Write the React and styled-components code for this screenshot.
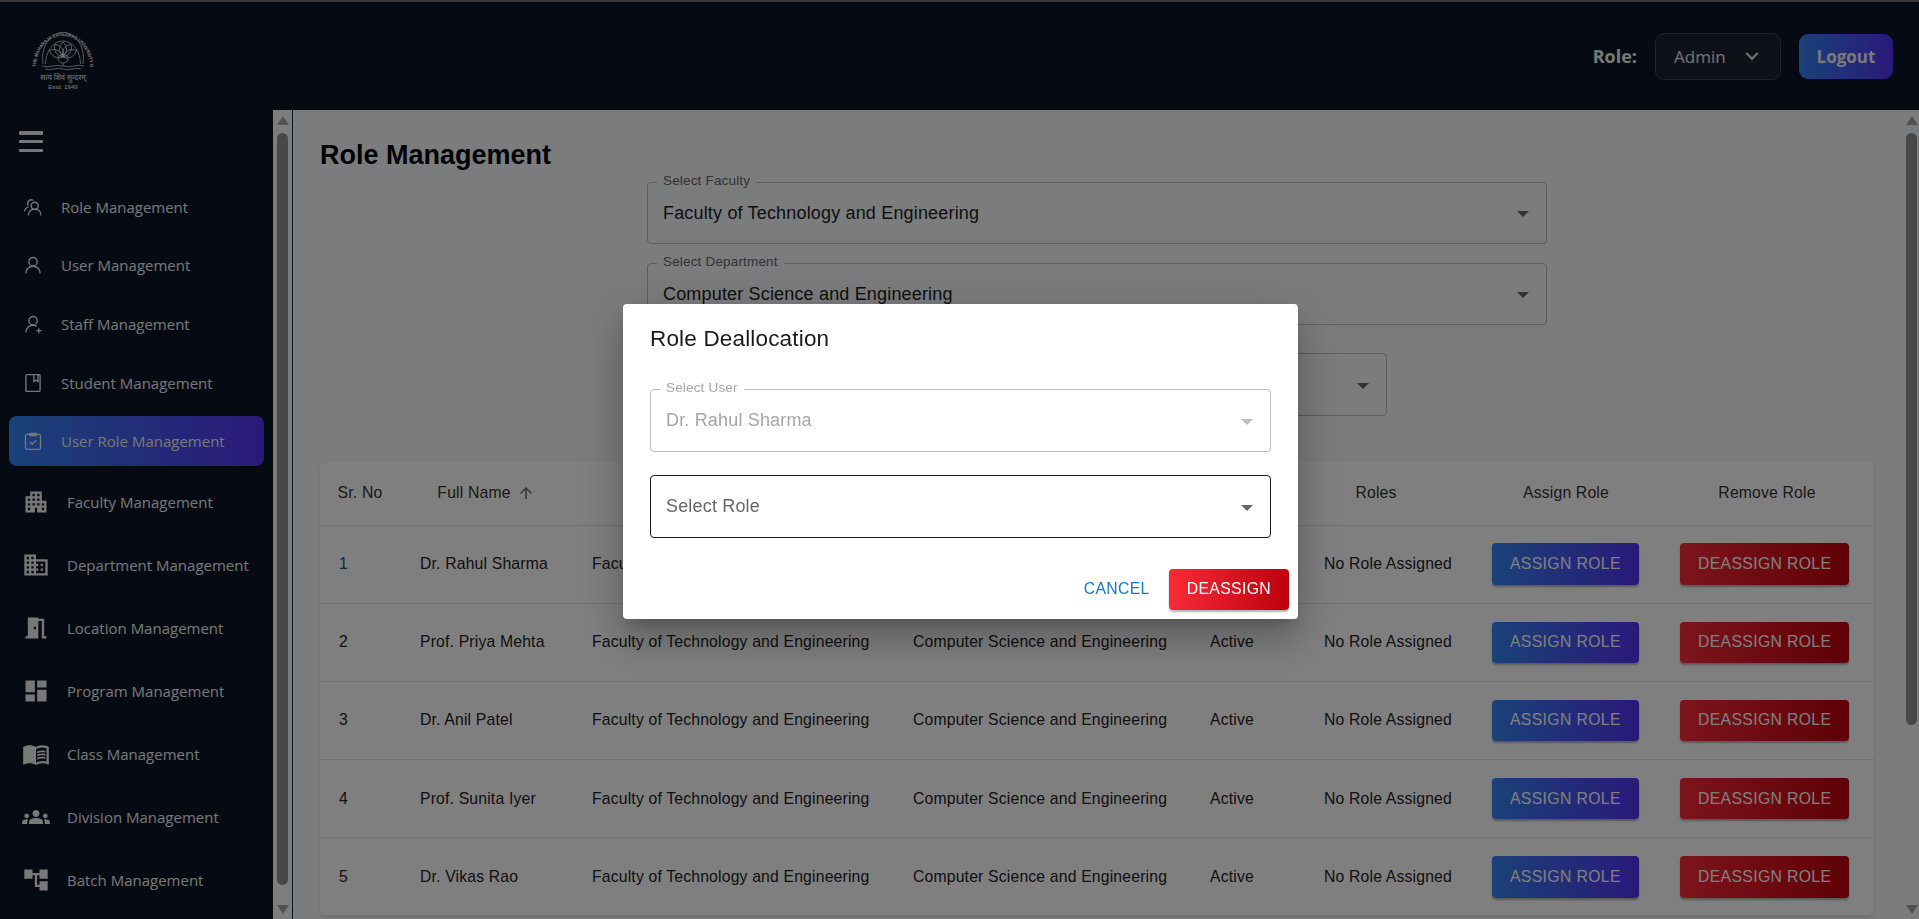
import styled, { createGlobalStyle } from 'styled-components';
import { MdApartment, MdDomain, MdMeetingRoom, MdDashboard, MdMenuBook, MdGroups, MdAccountTree, MdKeyboardArrowDown } from 'react-icons/md';

const GlobalStyle = createGlobalStyle`
  html, body {
    margin: 0;
    height: 100%;
    overflow: hidden;
    background: #f6f8fc;
    font-family: "Liberation Sans", Arial, sans-serif;
  }
  * { box-sizing: border-box; }
`;

const Page = styled.div`
  height: 100vh;
  display: flex;
  flex-direction: column;
  overflow: hidden;
`;

const TopBar = styled.header`
  height: 110px;
  flex: none;
  display: flex;
  align-items: center;
  justify-content: space-between;
  padding: 0 26px 0 29px;
  background: #0c1626;
  border-top: 2px solid #6e7278;
`;

const LogoWrap = styled.div`
  width: 68px;
  height: 74px;
  margin-top: -4px;
  color: #f4f4f4;
`;

const HeaderRight = styled.div`
  display: flex;
  align-items: center;
  font-family: "Open Sans", sans-serif;
`;

const RoleLabel = styled.span`
  font-size: 18px;
  font-weight: 700;
  color: #f0f0f0;
  margin-right: 18px;
`;

const RoleSelect = styled.div`
  width: 126px;
  height: 47px;
  display: flex;
  align-items: center;
  justify-content: space-between;
  padding: 0 15px 0 18px;
  margin-right: 18px;
  border: 1px solid #3f444c;
  border-radius: 9px;
  background: #1d2430;
  color: #e6e6e6;
  font-size: 17px;
`;

const LogoutButton = styled.button`
  width: 94px;
  height: 45px;
  border: 0;
  border-radius: 9px;
  background: linear-gradient(90deg, #3484f0, #5632f4);
  color: #f4f4f4;
  font: 700 17px "Open Sans", sans-serif;
`;

const Body = styled.div`
  flex: 1;
  min-height: 0;
  display: flex;
`;

const Sidebar = styled.nav`
  width: 273px;
  flex: none;
  background: #0c1626;
  padding: 21px 9px 0;
  overflow: hidden;
  font-family: "Open Sans", sans-serif;
`;

const MenuToggle = styled.div`
  width: 24px;
  height: 21px;
  margin: 0 0 29.500px 10px;
  display: flex;
  flex-direction: column;
  justify-content: space-between;

  span {
    height: 3.500px;
    background: #f0f0f0;
    border-radius: 1px;
  }
`;

const NavGroup = styled.div`
  display: flex;
  flex-direction: column;
  gap: ${props => (props.$wide ? '0' : '8.700px')};
  margin-top: ${props => (props.$wide ? '3.800px' : '0')};
`;

const NavItem = styled.div`
  height: ${props => (props.$wide ? '63px' : '50px')};
  display: flex;
  align-items: center;
  gap: ${props => (props.$wide ? '17px' : '18px')};
  padding-left: ${props => (props.$wide ? '13px' : '14px')};
  border-radius: 8px;
  color: #eceef0;
  font-size: 15px;
  background: ${props => (props.$active ? 'linear-gradient(90deg, #3484f0, #5632f4)' : 'transparent')};

  svg {
    flex: none;
    color: #f0f0f0;
  }
`;

const ScrollTrack = styled.div`
  width: ${props => props.$width}px;
  flex: none;
  display: flex;
  flex-direction: column;
  align-items: center;
  padding-top: 6px;
  background: ${props => props.$bg};
  border-right: ${props => (props.$divider ? '1px solid #1b2a3c' : '0')};
`;

const ScrollArrow = styled.div`
  width: 0;
  height: 0;
  border-left: 6px solid transparent;
  border-right: 6px solid transparent;
  border-bottom: ${props => (props.$down ? '0' : '9px solid #a4a4a4')};
  border-top: ${props => (props.$down ? '9px solid #a4a4a4' : '0')};
  margin-top: ${props => (props.$down ? 'auto' : '0')};
  margin-bottom: ${props => (props.$down ? '5px' : '8px')};
`;

const ScrollThumb = styled.div`
  width: 11px;
  height: ${props => props.$height}px;
  border-radius: 6px;
  background: #909090;
`;

const Main = styled.main`
  flex: 1;
  min-width: 0;
  padding: 29px 30px 0 27px;
  overflow: hidden;
  background: #f6f8fc;
`;

const Title = styled.h1`
  margin: 0 0 11px;
  font-size: 27px;
  line-height: 32px;
  font-weight: 700;
  color: #000;
`;

const Filters = styled.div`
  display: flex;
  flex-direction: column;
  align-items: center;
  margin-bottom: 45px;
`;

const SelectBox = styled.div`
  position: relative;
  width: ${props => props.$width || '100%'};
  height: ${props => props.$height || 62}px;
  margin-bottom: ${props => props.$gap || 0}px;
  display: flex;
  align-items: center;
  justify-content: space-between;
  padding: 0 17px 0 15px;
  border: 1px solid ${props => props.$border || '#b9babc'};
  border-radius: 4px;
  font-size: 18px;
  letter-spacing: 0.170px;
  color: ${props => props.$color || '#1d1d1d'};
`;

const SelectLabel = styled.label`
  position: absolute;
  top: -9px;
  left: 9px;
  padding: 0 6px;
  font-size: 13.500px;
  line-height: 14px;
  letter-spacing: 0.170px;
  color: ${props => props.$color || '#666'};
  background: ${props => props.$bg};
`;

const Caret = styled.span`
  width: 0;
  height: 0;
  margin-top: 2px;
  border-left: 6px solid transparent;
  border-right: 6px solid transparent;
  border-top: 6px solid ${props => props.$color || '#666'};
`;

const TableCard = styled.div`
  background: #fff;
  border-radius: 6px;
  box-shadow: 0 1px 3px rgba(0, 0, 0, 0.12);
  font-size: 15.750px;
  letter-spacing: 0.170px;
  color: #222;
`;

const TableRow = styled.div`
  display: grid;
  grid-template-columns: 80px 172px 321px 297px 114px 168px 188px 214px;
  align-items: center;
  height: ${props => (props.$head ? '64.500px' : '78.200px')};
  border-bottom: 1px solid #e2e3e5;
`;

const HeadCell = styled.div`
  display: flex;
  align-items: center;
  justify-content: center;
  gap: 6px;
  padding-right: ${props => (props.$hiddenSort ? '24px' : '0')};
  color: #333;
`;

const Cell = styled.div`
  padding-left: ${props => (props.$first ? '19px' : '20px')};
  white-space: nowrap;
  color: ${props => props.$color || '#222'};
`;

const ActionButton = styled.button`
  height: 41.500px;
  padding: 0 18px;
  border: 0;
  border-radius: 4px;
  font: 15.750px "Liberation Sans", Arial, sans-serif;
  letter-spacing: 0.360px;
  color: #fff;
  background: ${props => (props.$danger
    ? 'linear-gradient(90deg, #f92a38, #bd000d)'
    : 'linear-gradient(90deg, #3484f0, #5632f4)')};
  box-shadow: 0 2px 2px rgba(0, 0, 0, 0.3);
`;

const Overlay = styled.div`
  position: fixed;
  inset: 0;
  padding: 4px 0 0 2px;
  display: flex;
  align-items: center;
  justify-content: center;
  background: rgba(0, 0, 0, 0.5);
`;

const Dialog = styled.div`
  width: 675px;
  height: 315px;
  padding: 20px 9px 9px 27px;
  display: flex;
  flex-direction: column;
  background: #fff;
  border-radius: 4px;
  box-shadow: 0 11px 15px -7px rgba(0, 0, 0, 0.2), 0 24px 38px 3px rgba(0, 0, 0, 0.14), 0 9px 46px 8px rgba(0, 0, 0, 0.12);
`;

const DialogTitle = styled.h2`
  margin: 0 0 35px;
  font-size: 22.500px;
  line-height: 30px;
  letter-spacing: 0.170px;
  font-weight: 400;
  color: #1a1a1a;
`;

const DialogField = styled.div`
  width: 621px;
`;

const DialogActions = styled.div`
  margin-top: auto;
  display: flex;
  justify-content: flex-end;
  align-items: center;
  gap: 19px;
`;

const TextButton = styled.button`
  padding: 0;
  border: 0;
  background: none;
  font: 15.750px "Liberation Sans", Arial, sans-serif;
  letter-spacing: 0.360px;
  color: #1976d2;
`;

const navTop = [
  { label: 'Role Management', icon: RoleIcon },
  { label: 'User Management', icon: UserIcon },
  { label: 'Staff Management', icon: StaffIcon },
  { label: 'Student Management', icon: BookIcon },
  { label: 'User Role Management', icon: ClipboardIcon, active: true },
];

const navBottom = [
  { label: 'Faculty Management', icon: MdApartment },
  { label: 'Department Management', icon: MdDomain },
  { label: 'Location Management', icon: MdMeetingRoom },
  { label: 'Program Management', icon: MdDashboard },
  { label: 'Class Management', icon: MdMenuBook },
  { label: 'Division Management', icon: MdGroups },
  { label: 'Batch Management', icon: MdAccountTree },
];

const users = ['Dr. Rahul Sharma', 'Prof. Priya Mehta', 'Dr. Anil Patel', 'Prof. Sunita Iyer', 'Dr. Vikas Rao'];

function LineIcon({ children }) {
  return (
    <svg width="20" height="20" viewBox="0 0 24 24" fill="none" stroke="currentColor" strokeWidth="1.600" strokeLinecap="round" strokeLinejoin="round">
      {children}
    </svg>
  );
}

function RoleIcon() {
  return (
    <LineIcon>
      <circle cx="14" cy="10.500" r="4.200" />
      <path d="M6.500 21.500c0-4 3.200-6.800 7.500-6.800s7.500 2.800 7.500 6.800" />
      <path d="M11.500 3.800a4.200 4.200 0 0 0-5.500 5.700M2 16.500c.6-2.200 2-3.800 4-4.600" />
    </LineIcon>
  );
}

function UserIcon() {
  return (
    <LineIcon>
      <circle cx="12" cy="8" r="5" />
      <path d="M3.500 21.500c0-4.600 3.700-8 8.500-8s8.500 3.400 8.500 8" />
    </LineIcon>
  );
}

function StaffIcon() {
  return (
    <LineIcon>
      <circle cx="12" cy="8" r="5" />
      <path d="M3.500 21.500c0-4.600 3.700-8 8.500-8 1.500 0 2.900.3 4.100.9" />
      <path d="M19 17.500v5M16.500 20h5" />
    </LineIcon>
  );
}

function BookIcon() {
  return (
    <LineIcon>
      <rect x="3.500" y="2" width="17" height="20" rx="1" />
      <path d="M13 2v8.500l2.500-2 2.500 2V2" />
    </LineIcon>
  );
}

function ClipboardIcon() {
  return (
    <LineIcon>
      <rect x="3" y="4" width="18" height="18" rx="2" />
      <path d="M8 3h8v2.500H8z" fill="currentColor" />
      <path d="M8.500 13.500l2.500 2.500 4.500-4.500" />
    </LineIcon>
  );
}

function SortUpIcon() {
  return (
    <svg width="18" height="18" viewBox="0 0 24 24" fill="#666">
      <path d="M4 12l1.410 1.410L11 7.830V20h2V7.830l5.580 5.590L20 12l-8-8-8 8z" />
    </svg>
  );
}

// the university emblem: ring of text, double arch, lotus, water lines
function Logo() {
  const petals = [-64, -32, 0, 32, 64];
  return (
    <svg width="68" height="74" viewBox="0 0 68 74" fill="none" stroke="currentColor" strokeWidth="0.700">
      <defs>
        <path id="logoArc" d="M7 50 A27 31 0 1 1 61 50" />
      </defs>
      <text fontFamily="Liberation Sans, sans-serif" fontSize="4.600" fontWeight="700" fill="currentColor" stroke="none">
        <textPath href="#logoArc" textLength="114" lengthAdjust="spacingAndGlyphs">THE MAHARAJA SAYAJIRAO UNIVERSITY OF BARODA</textPath>
      </text>
      <path d="M14 47 A20.500 26 0 1 1 54 47" />
      <path d="M16.500 47 A17.500 23 0 1 1 51.500 47" />
      <g transform="translate(34 40)">
        {petals.map(angle => (
          <path key={angle} transform={`rotate(${angle})`} d="M0 0C-5 -4 -4.500 -11 0 -15C4.500 -11 5 -4 0 0Z" />
        ))}
        <path d="M-5 0C-5 5 -3 6 0 6C3 6 5 5 5 0C3 -3 -3 -3 -5 0Z" />
        <path d="M0 6V9" />
      </g>
      <path d="M13 49q5.250 1.500 10.500 0t10.500 0 10.500 0 10.500 0M16 52q4.500 1.500 9 0t9 0 9 0 9 0" />
      <text x="34" y="62.500" textAnchor="middle" fontFamily="Noto Sans, sans-serif" fontSize="7.500" fill="currentColor" stroke="none">सत्यं शिवं सुन्दरम्</text>
      <text x="34" y="72" textAnchor="middle" fontFamily="Liberation Sans, sans-serif" fontSize="6.200" fill="currentColor" stroke="none">Estd. 1949</text>
    </svg>
  );
}

function App() {
  return (
    <Page>
      <GlobalStyle />
      <TopBar>
        <LogoWrap><Logo /></LogoWrap>
        <HeaderRight>
          <RoleLabel>Role:</RoleLabel>
          <RoleSelect>
            Admin
            <MdKeyboardArrowDown size={26} />
          </RoleSelect>
          <LogoutButton>Logout</LogoutButton>
        </HeaderRight>
      </TopBar>

      <Body>
        <Sidebar>
          <MenuToggle><span /><span /><span /></MenuToggle>
          <NavGroup>
            {navTop.map(({ label, icon: Icon, active }) => (
              <NavItem key={label} $active={active}>
                <Icon />
                {label}
              </NavItem>
            ))}
          </NavGroup>
          <NavGroup $wide>
            {navBottom.map(({ label, icon: Icon }) => (
              <NavItem key={label} $wide>
                <Icon size={28} />
                {label}
              </NavItem>
            ))}
          </NavGroup>
        </Sidebar>
        <ScrollTrack $width={20} $bg="#fafafa" $divider>
          <ScrollArrow />
          <ScrollThumb $height={752} />
          <ScrollArrow $down />
        </ScrollTrack>

        <Main>
          <Title>Role Management</Title>
          <Filters>
            <SelectBox $width="900px" $gap={19}>
              <SelectLabel $bg="#f6f8fc">Select Faculty</SelectLabel>
              Faculty of Technology and Engineering
              <Caret />
            </SelectBox>
            <SelectBox $width="900px" $gap={28}>
              <SelectLabel $bg="#f6f8fc">Select Department</SelectLabel>
              Computer Science and Engineering
              <Caret />
            </SelectBox>
            <SelectBox $width="580px" $height={63}>
              <span />
              <Caret />
            </SelectBox>
          </Filters>

          <TableCard>
            <TableRow $head>
              <HeadCell>Sr. No</HeadCell>
              <HeadCell>Full Name <SortUpIcon /></HeadCell>
              <HeadCell>Faculty</HeadCell>
              <HeadCell>Department</HeadCell>
              <HeadCell>Status</HeadCell>
              <HeadCell $hiddenSort>Roles</HeadCell>
              <HeadCell>Assign Role</HeadCell>
              <HeadCell>Remove Role</HeadCell>
            </TableRow>
            {users.map((name, index) => (
              <TableRow key={name}>
                <Cell $first $color={index === 0 ? '#1b4f8f' : '#222'}>{index + 1}</Cell>
                <Cell>{name}</Cell>
                <Cell>Faculty of Technology and Engineering</Cell>
                <Cell>Computer Science and Engineering</Cell>
                <Cell>Active</Cell>
                <Cell>No Role Assigned</Cell>
                <Cell><ActionButton>ASSIGN ROLE</ActionButton></Cell>
                <Cell><ActionButton $danger>DEASSIGN ROLE</ActionButton></Cell>
              </TableRow>
            ))}
          </TableCard>
        </Main>
        <ScrollTrack $width={15} $bg="transparent">
          <ScrollArrow />
          <ScrollThumb $height={592} />
          <ScrollArrow $down />
        </ScrollTrack>
      </Body>

      <Overlay>
        <Dialog role="dialog">
          <DialogTitle>Role Deallocation</DialogTitle>
          <DialogField>
            <SelectBox $height={63} $gap={23} $border="#bdbdbd" $color="#a6a6a6">
              <SelectLabel $bg="#fff" $color="#a6a6a6">Select User</SelectLabel>
              Dr. Rahul Sharma
              <Caret $color="#bdbdbd" />
            </SelectBox>
            <SelectBox $height={63} $border="#1a1a1a" $color="#666">
              Select Role
              <Caret />
            </SelectBox>
          </DialogField>
          <DialogActions>
            <TextButton>CANCEL</TextButton>
            <ActionButton $danger>DEASSIGN</ActionButton>
          </DialogActions>
        </Dialog>
      </Overlay>
    </Page>
  );
}

export default App;
